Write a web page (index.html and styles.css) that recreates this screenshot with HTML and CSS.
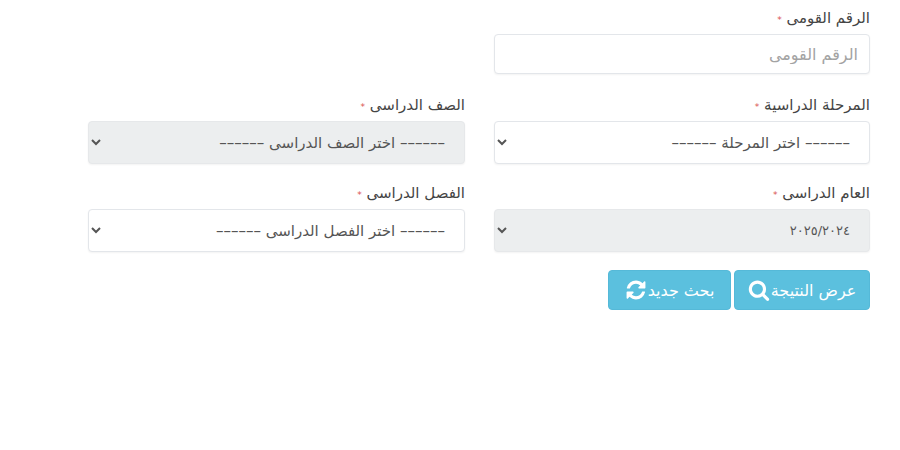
FILE: index.html
```html
<!DOCTYPE html>
<html lang="ar" dir="rtl">
<head>
<meta charset="utf-8">
<title>نتيجة الطالب</title>
<link rel="stylesheet" href="styles.css">
</head>
<body>
<form class="search-form">
	<div class="fields">
		<div class="field">
			<label class="field-label">الرقم القومى <span class="req">*</span></label>
			<input class="control input-box" type="text" placeholder="الرقم القومى">
		</div>
		<div class="field"></div>

		<div class="field">
			<label class="field-label">المرحلة الدراسية <span class="req">*</span></label>
			<select class="control select-box">
				<option>–––––– اختر المرحلة ––––––</option>
			</select>
		</div>
		<div class="field">
			<label class="field-label">الصف الدراسى <span class="req">*</span></label>
			<select class="control select-box" disabled>
				<option>–––––– اختر الصف الدراسى ––––––</option>
			</select>
		</div>

		<div class="field">
			<label class="field-label">العام الدراسى <span class="req">*</span></label>
			<select class="control select-box year-select" disabled>
				<option>٢٠٢٥/٢٠٢٤</option>
			</select>
		</div>
		<div class="field">
			<label class="field-label">الفصل الدراسى <span class="req">*</span></label>
			<select class="control select-box">
				<option>–––––– اختر الفصل الدراسى ––––––</option>
			</select>
		</div>
	</div>

	<div class="actions">
		<button class="btn btn-show" type="button">
			عرض النتيجة
			<svg class="btn-icon" viewBox="0 0 1792 1792"><path d="M1216 832q0-185-131.5-316.5t-316.5-131.5-316.5 131.5-131.5 316.5 131.5 316.5 316.5 131.5 316.5-131.5 131.5-316.5zm512 832q0 52-38 90t-90 38q-54 0-90-38l-343-342q-179 124-399 124-143 0-273.5-55.5t-225-150-150-225-55.5-273.5 55.5-273.5 150-225 225-150 273.5-55.5 273.5 55.5 225 150 150 225 55.5 273.5q0 220-124 399l343 343q37 37 37 90z"/></svg>
		</button>
		<button class="btn btn-new" type="button">
			بحث جديد
			<svg class="btn-icon" viewBox="0 0 1792 1792"><path d="M1639 1056q0 5-1 7-64 268-268 434.5t-478 166.5q-146 0-282.5-55t-243.5-157l-129 129q-19 19-45 19t-45-19-19-45v-448q0-26 19-45t45-19h448q26 0 45 19t19 45-19 45l-137 137q71 66 161 102t187 36q134 0 250-65t186-179q11-17 53-117 8-23 30-23h192q13 0 22.5 9.5t9.5 22.5zm25-800v448q0 26-19 45t-45 19h-448q-26 0-45-19t-19-45 19-45l138-138q-148-137-349-137-134 0-250 65t-186 179q-11 17-53 117-8 23-30 23h-199q-13 0-22.5-9.5t-9.5-22.5v-7q65-268 270-434.5t480-166.5q146 0 284 55.5t245 156.5l130-129q19-19 45-19t45 19 19 45z"/></svg>
		</button>
	</div>
</form>
</body>
</html>
```

FILE: styles.css
```css
* { margin: 0; padding: 0; box-sizing: border-box; font-family: "DejaVu Sans", "Noto Sans", sans-serif; }
html, body { width: 900px; height: 450px; overflow: hidden; background: #fff; }
.search-form { width: 782px; margin: 9px 30px 0 88px; }
.fields { display: grid; grid-template-columns: 376px 377px; gap: 20px 29px; justify-content: space-between; }
.field-label { display: block; height: 20px; margin-bottom: 5px; font-size: 15px; line-height: 18px; color: #444; }
.req { color: #d9534f; font-size: 9px; }
.control { display: block; width: 100%; border: 1px solid #e3e6ea; border-radius: 4px; background: #fff; font-size: 15px; color: #555; box-shadow: 0 1px 2px rgba(0,0,0,.05); }
.input-box { height: 40px; margin-bottom: 2px; padding: 0 11px; font-size: 16px; }
.input-box::placeholder { color: #a3a3a3; }
.select-box { height: 43px; padding: 0 15px; }
.select-box:disabled { background: #eceeef; border-color: #e6e8ea; color: #555; opacity: 1; }
.year-select { font-size: 13px; }
.actions { display: flex; gap: 3px; margin-top: 18px; }
.btn { display: flex; align-items: center; justify-content: center; gap: 1px; height: 40px; border: 1px solid #55b9d8; border-radius: 4px; background: #5bc0de; color: #fff; font-size: 16px; }
.btn-show { width: 136px; }
.btn-new { width: 123px; }
.btn-icon { flex: none; width: 22px; height: 22px; fill: #fff; }
```
